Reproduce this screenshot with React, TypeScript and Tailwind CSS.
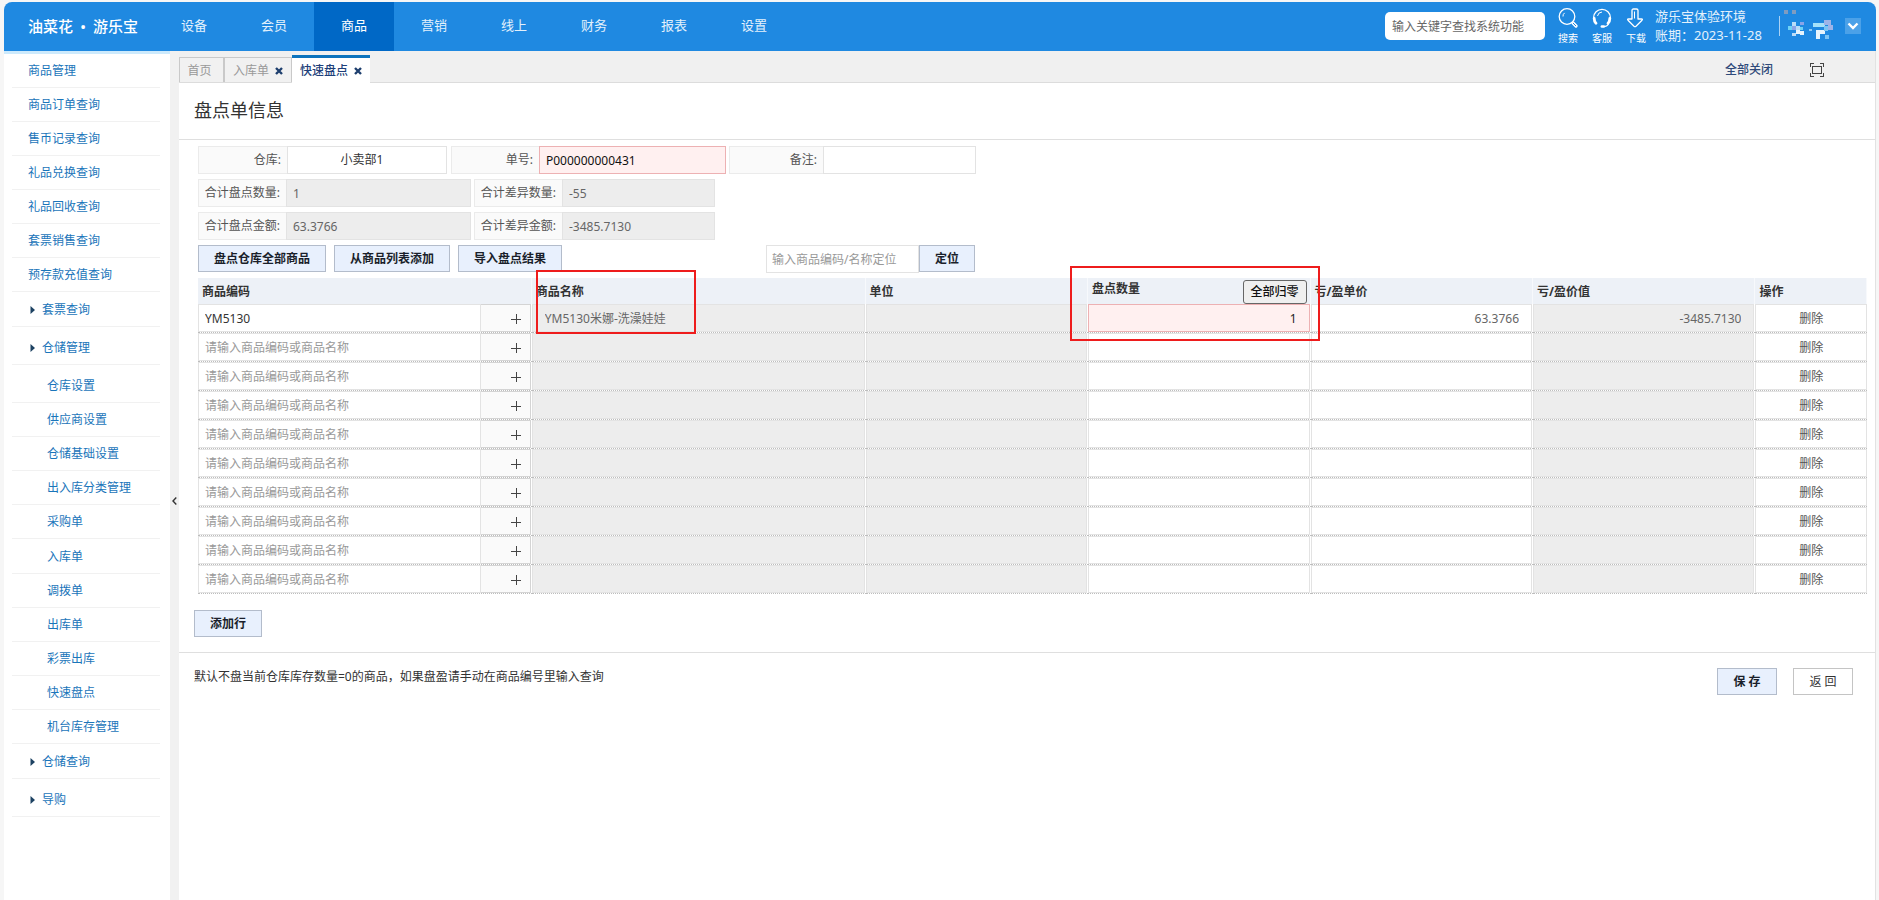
import React from "react";

const topNav = ["设备", "会员", "商品", "营销", "线上", "财务", "报表", "设置"];

type MenuItem = { label: string; kind: "top" | "group" | "sub"; tall?: boolean };

const menu: MenuItem[][] = [
  [
    { label: "商品管理", kind: "top" },
    { label: "商品订单查询", kind: "top" },
    { label: "售币记录查询", kind: "top" },
    { label: "礼品兑换查询", kind: "top" },
    { label: "礼品回收查询", kind: "top" },
    { label: "套票销售查询", kind: "top" },
    { label: "预存款充值查询", kind: "top" },
  ],
  [
    { label: "套票查询", kind: "group" },
    { label: "仓储管理", kind: "group", tall: true },
    { label: "仓库设置", kind: "sub", tall: true },
    { label: "供应商设置", kind: "sub" },
    { label: "仓储基础设置", kind: "sub" },
    { label: "出入库分类管理", kind: "sub" },
    { label: "采购单", kind: "sub" },
  ],
  [
    { label: "入库单", kind: "sub" },
    { label: "调拨单", kind: "sub" },
    { label: "出库单", kind: "sub" },
    { label: "彩票出库", kind: "sub" },
    { label: "快速盘点", kind: "sub" },
    { label: "机台库存管理", kind: "sub" },
  ],
  [
    { label: "仓储查询", kind: "group" },
    { label: "导购", kind: "group", tall: true },
  ],
];

const indent = { top: "pl-4", group: "pl-[18px]", sub: "pl-[35px]" };

const rows = [
  { code: "YM5130", name: "YM5130米娜-洗澡娃娃", qty: "1", price: "63.3766", value: "-3485.7130" },
  ...Array.from({ length: 9 }, () => ({ code: "", name: "", qty: "", price: "", value: "" })),
];

const primaryBtn =
  "h-[27px] border border-[#b3bccb] bg-[#e8f0fd] text-center font-bold text-[#1a1f2b]";
const fieldLabel =
  "flex h-7 items-center justify-end border border-r-0 border-[#ebebeb] bg-[#fafafa] text-[#555]";

function Toolbox() {
  return (
    <div className="flex gap-[14px] text-[10px] leading-3 text-white">
      <a href="#search" className="flex w-5 flex-col items-center whitespace-nowrap">
        <svg className="mb-1 h-5 w-5" viewBox="0 0 20 20" fill="none" stroke="white">
          <circle cx="9" cy="8.500" r="7.800" strokeWidth="1.300" />
          <path d="M5 8.500a4 4 0 0 1 1.600-3.600" strokeWidth="1" />
          <path d="M15 15l3 3" strokeWidth="3.200" strokeLinecap="round" />
          <path d="M15.200 15.200l2.600 2.600" stroke="#1f89e1" strokeWidth="1" strokeLinecap="round" />
        </svg>
        搜索
      </a>
      <a href="#service" className="flex w-5 flex-col items-center whitespace-nowrap">
        <svg className="mb-1 h-5 w-5" viewBox="0 0 20 20" fill="none" stroke="white">
          <path d="M1.600 11V9.600a8.400 8.200 0 0 1 16.800 0V11" strokeWidth="1.300" />
          <path d="M5.500 8a4.800 4.800 0 0 1 4.500-4" strokeWidth="1" />
          <path d="M2.200 10.500c0 2 .6 3.600 1.800 4.800M17.800 10.500c0 2-.6 3.600-1.800 4.800" strokeWidth="2.800" strokeLinecap="round" />
          <path d="M16.500 16c-1 1.800-2.800 2.600-5 2.600" strokeWidth="1.200" />
          <path d="M9.800 18.500h2" strokeWidth="2.400" strokeLinecap="round" />
        </svg>
        客服
      </a>
      <a href="#download" className="flex w-5 flex-col items-center whitespace-nowrap">
        <svg className="mb-1 h-5 w-5" viewBox="0 0 20 20" fill="none" stroke="white" strokeWidth="1.300" strokeLinejoin="round">
          <path d="M6 2.500Q6 1 7.500 1H10.500Q12 1 12 2.500V11H15.500Q17 11 16 12.200L10 18.200Q9 19 8 18.200L2 12.200Q1 11 2.500 11H6z" />
          <path d="M8.500 3.500v7" strokeWidth="1" />
        </svg>
        下载
      </a>
    </div>
  );
}

function MaskedName() {
  return (
    <svg className="h-8 w-[50px]" viewBox="0 0 50 32" shapeRendering="crispEdges" aria-hidden="true">
      <g>
        <path fill="#7f9cc0" d="M0 0h4v4H0zM8 0h4v4H8z" />
        <path fill="#b9dcf8" d="M8 12h4v4H8zM12 16h4v4h-4zM8 23h4v3H8z" />
        <path fill="#8ba4e8" d="M8 16h4v4H8zM16 12h4v3h-4z" />
        <path fill="#e6f4fd" d="M12 20h4v4h-4zM16 21h4v4h-4z" />
        <path fill="#6fd3f5" d="M4 16h4v4H4zM16 17h3v3h-3z" />
        <path fill="#8cc8f4" d="M25 19h3v2h-3z" />
        <path fill="#a5e2fa" d="M29 13h12v4H29z" />
        <path fill="#9fb4e8" d="M40 10h7v5h-7zM44 15h5v5h-5z" />
        <path fill="#e6f4fd" d="M32 20h9v4h-9zM32 24h4v5h-4z" />
        <path fill="#7dc4f4" d="M40 16h4v5h-4zM41 25h4v4h-4z" />
      </g>
    </svg>
  );
}

function Header() {
  return (
    <header className="flex h-[49px] items-center rounded-t-lg bg-[#1f89e1] text-white">
      <div className="flex w-[150px] shrink-0 items-center pb-px pl-6 text-[15px] leading-5 font-medium">
        <span>油菜花</span>
        <span className="w-5 text-center">•</span>
        <span>游乐宝</span>
      </div>
      <nav className="flex h-full">
        {topNav.map((n) => (
          <a
            key={n}
            href={"#" + n}
            className={
              "flex h-full w-20 items-center justify-center pb-[3px] text-[13px] " +
              (n === "商品" ? "bg-[#0068c6]" : "text-[#e3f1fc]")
            }
          >
            {n}
          </a>
        ))}
      </nav>
      <div className="ml-auto flex items-center pr-[15px] pb-px">
        <input
          aria-label="查找系统功能"
          placeholder="输入关键字查找系统功能"
          className="mr-[13px] h-7 w-40 rounded-[5px] bg-white px-[7px] text-[12px] text-[#333] placeholder:text-[#666]"
        />
        <Toolbox />
        <div className="ml-[9px] w-[114px] text-[13px] leading-[19px] whitespace-nowrap text-[#e3f1fc]">
          <div>游乐宝体验环境</div>
          <div>账期：2023-11-28</div>
        </div>
        <div className="ml-[10px] h-5 w-px bg-[#a9d2f5]" />
        <div className="ml-1">
          <MaskedName />
        </div>
        <button aria-label="账户菜单" className="ml-[11px] flex h-4 w-4 items-center justify-center bg-[#4ba1e8]">
          <svg className="h-3 w-3" viewBox="0 0 12 12" fill="none" stroke="white" strokeWidth="2.400">
            <path d="M1.500 3.500L6 8l4.500-4.500" />
          </svg>
        </button>
      </div>
    </header>
  );
}

function Sidebar() {
  return (
    <aside className="w-[166px] shrink-0 border-t-[3px] border-[#cdeafc] bg-white pr-[10px] pl-2">
      {menu.map((group, i) => (
        <ul key={i} className="pb-px">
          {group.map((m) => (
            <li
              key={m.label}
              className={"border-b border-[#f1f1f1] " + (m.tall ? "h-[38px] pt-1" : "h-[34px]")}
            >
              <a href={"#" + m.label} className={"flex h-full items-center text-[#1a75ba] " + indent[m.kind]}>
                {m.kind === "group" && (
                  <svg className="mr-[7px] h-2 w-[5px]" viewBox="0 0 5 8" fill="#1d4262">
                    <path d="M0.500 0L5 4 0.500 8z" />
                  </svg>
                )}
                {m.label}
              </a>
            </li>
          ))}
        </ul>
      ))}
    </aside>
  );
}

function CloseMark() {
  return (
    <svg className="h-2 w-2" viewBox="0 0 8 8" stroke="#1e3f6e" strokeWidth="2.400">
      <path d="M1 1l6 6M7 1L1 7" />
    </svg>
  );
}

function Tabs() {
  return (
    <div className="flex h-8 items-end border-b border-[#dcdcdc] bg-[#f0f0f0]">
      <button className="h-[25px] w-[46px] border-t border-r-2 border-l border-[#c9c9c9] bg-[#f1f1f1] pt-px pr-1 text-[#999]">首页</button>
      <div className="flex h-[25px] w-[67px] items-center justify-between border-t border-r border-[#c9c9c9] bg-[#f1f1f1] px-2 pt-px text-[#999]">
        <button>入库单</button>
        <button aria-label="关闭入库单"><CloseMark /></button>
      </div>
      <div className="-mb-px flex h-7 w-[78px] items-center justify-between border-t-[3px] border-[#0c73bd] bg-white px-2 text-[#1e3f7a]">
        <button className="font-medium">快速盘点</button>
        <button aria-label="关闭快速盘点"><CloseMark /></button>
      </div>
      <div className="ml-auto flex h-full items-center pt-[6px] pr-[51px]">
        <button className="mr-[37px] font-medium text-[#2f4a7a]">全部关闭</button>
        <button aria-label="全屏">
          <svg className="h-[14px] w-[14px]" viewBox="0 0 14 14" fill="none" stroke="#444" shapeRendering="crispEdges">
            <path d="M0.500 4V0.500H4M10 0.500h3.500V4M13.500 10v3.500H10M4 13.500H0.500V10" />
            <rect x="2.500" y="3.500" width="9" height="7" />
          </svg>
        </button>
      </div>
    </div>
  );
}

function ReadonlyPair({ id, label, value, width }: { id: string; label: string; value: string; width: string }) {
  return (
    <div className="flex">
      <label htmlFor={id} className={fieldLabel + " w-[88px] pr-[6px]"}>{label}</label>
      <input
        id={id}
        readOnly
        value={value}
        className={"h-7 border border-[#e3e3e3] bg-[#ededed] px-[6px] text-[#666] " + width}
      />
    </div>
  );
}

function Form() {
  return (
    <div className="flex flex-col gap-[5px] px-[19px] pt-[6px]">
      <div className="flex">
        <label htmlFor="wh" className={fieldLabel + " w-[89px] pr-[6px]"}>仓库:</label>
        <select
          id="wh"
          className="mr-1 h-7 w-40 appearance-none border border-[#e3e3e3] bg-white pr-[10px] text-center text-[#333]"
        >
          <option>小卖部1</option>
        </select>
        <label htmlFor="no" className={fieldLabel + " w-[88px] pr-[6px]"}>单号:</label>
        <input id="no" defaultValue="P000000000431" className="mr-[3px] h-7 w-[187px] border border-[#edb1b3] bg-[#fff0f0] px-[6px] text-[#111]" />
        <label htmlFor="memo" className={fieldLabel + " w-[94px] pr-[6px]"}>备注:</label>
        <input id="memo" className="h-7 w-[153px] border border-[#e3e3e3] bg-white px-[6px]" />
      </div>
      <div className="flex gap-[3px]">
        <ReadonlyPair id="q1" label="合计盘点数量:" value="1" width="w-[185px]" />
        <ReadonlyPair id="q2" label="合计差异数量:" value="-55" width="w-[153px]" />
      </div>
      <div className="flex gap-[3px]">
        <ReadonlyPair id="a1" label="合计盘点金额:" value="63.3766" width="w-[185px]" />
        <ReadonlyPair id="a2" label="合计差异金额:" value="-3485.7130" width="w-[153px]" />
      </div>
      <div className="flex h-7">
        <button className={primaryBtn + " mr-2 w-32"}>盘点仓库全部商品</button>
        <button className={primaryBtn + " mr-2 w-[116px]"}>从商品列表添加</button>
        <button className={primaryBtn + " w-[104px]"}>导入盘点结果</button>
        <input
          aria-label="商品定位"
          placeholder="输入商品编码/名称定位"
          className="ml-[204px] h-7 w-[153px] border border-[#e3e3e3] bg-white px-[5px] placeholder:text-[#999]"
        />
        <button className={primaryBtn + " w-14"}>定位</button>
      </div>
    </div>
  );
}

const th = "relative border-r border-[#f7f9fc] bg-[#edf1f7] pt-[2px] pl-1 text-left font-bold text-[#333]";
const td = "border-b border-dotted border-[#bdbdbd] p-0";
const box = "block h-7 w-full border border-[#e3e3e3] bg-white";
const grayBox = "block h-7 w-full border border-[#e3e3e3] bg-[#ededed] text-[#666]";

function GoodsTable() {
  return (
    <div className="pt-[5px] pr-2 pl-[19px]">
      <table className="w-full table-fixed border-separate border-spacing-0">
        <colgroup>
          <col className="w-[20%]" />
          <col className="w-[20%]" />
          <col className="w-[13.33%]" />
          <col className="w-[13.33%]" />
          <col className="w-[13.33%]" />
          <col className="w-[13.33%]" />
          <col />
        </colgroup>
        <thead>
          <tr className="h-[26px]">
            <th className={th}>商品编码</th>
            <th className={th}>
              商品名称
              <span className="pointer-events-none absolute -top-2 left-1 z-10 h-16 w-40 border-2 border-[#ee1c1c]" />
            </th>
            <th className={th}>单位</th>
            <th className={th}>
              <div className="flex items-start justify-between pr-[3px]">
                <span>盘点数量</span>
                <button className="h-6 w-16 rounded-[3px] border border-[#666] bg-[#efefef] font-medium text-[#111]">全部归零</button>
              </div>
              <span className="pointer-events-none absolute -top-3 -right-[10px] -left-[18px] z-10 h-[75px] border-2 border-[#ee1c1c]" />
            </th>
            <th className={th}>亏/盈单价</th>
            <th className={th}>亏/盈价值</th>
            <th className={th}>操作</th>
          </tr>
        </thead>
        <tbody>
          {rows.map((r, i) => (
            <tr key={i} className="h-[29px]">
              <td className={td}>
                <div className="flex pr-px">
                  <input
                    aria-label="商品编码"
                    defaultValue={r.code}
                    placeholder="请输入商品编码或商品名称"
                    className="h-7 min-w-0 flex-1 border border-[#e3e3e3] bg-white px-[6px] text-[#333] placeholder:text-[#999]"
                  />
                  <button aria-label="选择商品" className="flex h-7 w-[50px] items-center justify-end border border-l-0 border-[#d4d4d4] bg-[#fafafa] pt-[2px] pr-[9px]">
                    <svg className="h-[10px] w-[10px]" viewBox="0 0 10 10" stroke="#444" shapeRendering="crispEdges">
                      <path d="M0 5.500h10M5.500 0v10" />
                    </svg>
                  </button>
                </div>
              </td>
              <td className={td + " pr-px"}>
                <input aria-label="商品名称" readOnly value={r.name} className={grayBox + " px-3"} />
              </td>
              <td className={td + " pr-px"}>
                <input aria-label="单位" readOnly value="" className={grayBox} />
              </td>
              <td className={td + " pr-px"}>
                <input
                  aria-label="盘点数量"
                  defaultValue={r.qty}
                  className={
                    r.qty
                      ? "block h-7 w-full border border-[#edb1b3] bg-[#fff0f0] px-3 text-right text-[#222]"
                      : box + " px-3 text-right"
                  }
                />
              </td>
              <td className={td + " pr-px"}>
                <input aria-label="亏/盈单价" defaultValue={r.price} className={box + " px-3 text-right text-[#666]"} />
              </td>
              <td className={td + " pr-px"}>
                <input aria-label="亏/盈价值" readOnly value={r.value} className={grayBox + " px-3 text-right"} />
              </td>
              <td className={td}>
                <button className={box + " pt-[2px] text-center text-[#555]"}>删除</button>
              </td>
            </tr>
          ))}
        </tbody>
      </table>
    </div>
  );
}

export default function App() {
  return (
    <div className="min-h-screen bg-[#f6f6f6] px-1 pt-[2px] font-['Noto_Sans','Noto_Sans_CJK_SC',sans-serif] text-[12px] leading-[18px]">
      <div className="mr-[-1px] flex min-h-[calc(100vh-2px)] flex-col">
        <Header />
        <div className="flex flex-1 border-r border-[#e2e2e2]">
          <Sidebar />
          <div className="flex w-[9px] shrink-0 flex-col items-center justify-center bg-[#f1f1f1] pt-[51px]">
            <button aria-label="收起菜单">
              <svg className="h-2 w-[5px]" viewBox="0 0 5 8" fill="none" stroke="#333" strokeWidth="1.400">
                <path d="M4.300 0.500L1 4l3.300 3.500" />
              </svg>
            </button>
          </div>
          <main className="min-w-0 flex-1 bg-white">
            <Tabs />
            <h1 className="flex h-[57px] items-center border-b border-[#dfdfdf] pb-[2px] pl-[15px] text-[18px] text-[#333]">盘点单信息</h1>
            <Form />
            <GoodsTable />
            <div className="pt-4 pb-[15px] pl-[15px]">
              <button className={primaryBtn + " w-[68px]"}>添加行</button>
            </div>
            <footer className="flex items-start justify-between border-t border-[#dfdfdf] pt-[15px] pr-[22px] pl-[15px] text-[#333]">
              <p>默认不盘当前仓库库存数量=0的商品，如果盘盈请手动在商品编号里输入查询</p>
              <div className="flex gap-4">
                <button className={primaryBtn + " w-[60px]"}>保 存</button>
                <button className="h-[27px] w-[60px] border border-[#c4c4c4] bg-white text-[#333]">返 回</button>
              </div>
            </footer>
          </main>
        </div>
      </div>
    </div>
  );
}
